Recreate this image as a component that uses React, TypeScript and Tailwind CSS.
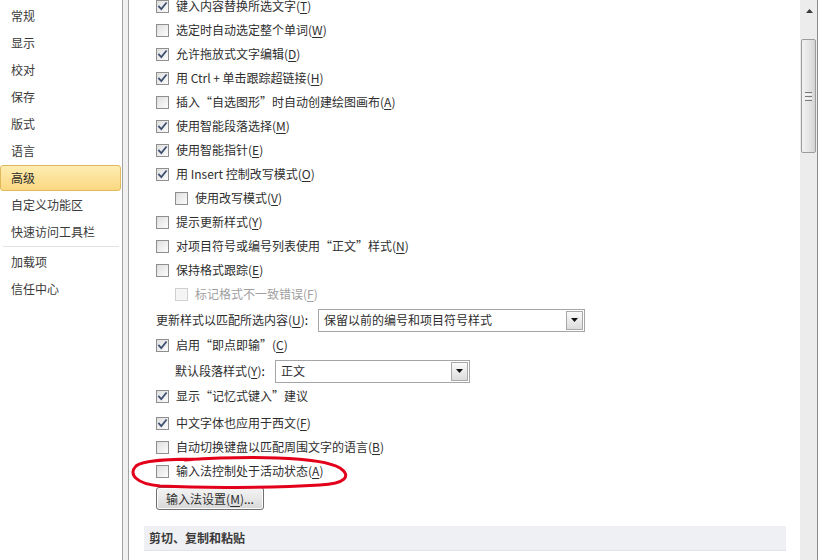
import React from "react";

const font = { fontFamily: '"Noto Sans CJK SC", "Microsoft YaHei", sans-serif' };

function Box({ checked, disabled }: { checked?: boolean; disabled?: boolean }) {
  return (
    <span
      className={
        "relative inline-flex h-[13px] w-[13px] shrink-0 items-center justify-center border " +
        (disabled ? "border-[#cfcfcf] bg-[#f7f7f7]" : "border-[#8f8f8f] bg-gradient-to-br from-[#dcdcdc] to-[#fbfbfb]")
      }
    >
      <span className={"absolute inset-[1px] " + (disabled ? "bg-[#f4f4f4]" : "bg-gradient-to-br from-[#e2e2e2] to-[#f9f9f9]")} />
      {checked && (
        <svg width="11" height="11" viewBox="0 0 11 11" className="relative">
          <path d="M2 5.5 L4.3 8 L9 2.2" fill="none" stroke="#3e4f72" strokeWidth="1.8" strokeLinecap="square" />
        </svg>
      )}
    </span>
  );
}

function Label({ text, acc, disabled }: { text: string; acc?: string; disabled?: boolean }) {
  return (
    <span className={"whitespace-nowrap " + (disabled ? "text-[#a0a0a0]" : "text-[#2e2e2e]")}>
      {text}
      {acc && (
        <>
          (<span className="underline underline-offset-2">{acc}</span>)
        </>
      )}
    </span>
  );
}

function Row({
  text,
  acc,
  checked,
  disabled,
  indent,
  mt,
  tail,
}: {
  text: string;
  acc?: string;
  checked?: boolean;
  disabled?: boolean;
  indent?: boolean;
  mt?: string;
  tail?: string;
}) {
  return (
    <div className={"flex h-[24px] items-center gap-[7px] " + (indent ? "pl-[19px] " : "") + (mt || "")}>
      <Box checked={checked} disabled={disabled} />
      <span>
        <Label text={text} acc={acc} disabled={disabled} />
        {tail && <span className="text-[#2e2e2e]">{tail}</span>}
      </span>
    </div>
  );
}

function Combo({ value, width }: { value: string; width: string }) {
  return (
    <div className={"flex h-[23px] items-center border border-[#a5a5a5] bg-white " + width}>
      <span className="flex-1 pl-[5px] text-[#2e2e2e] whitespace-nowrap">{value}</span>
      <span className="mr-[1px] flex h-[19px] w-[17px] items-center justify-center border border-[#a8a8a8] bg-gradient-to-b from-[#fafafa] to-[#dcdcdc]">
        <svg width="7" height="4" viewBox="0 0 7 4">
          <path d="M0 0 H7 L3.5 4 Z" fill="#111" />
        </svg>
      </span>
    </div>
  );
}

const side = ["常规", "显示", "校对", "保存", "版式", "语言", "高级", "自定义功能区", "快速访问工具栏"];

export default function App() {
  return (
    <div className="relative flex h-[560px] w-[825px] overflow-hidden bg-white text-[12px] leading-none" style={font}>
      {/* sidebar */}
      <div className="flex w-[123px] shrink-0 flex-col border-r border-[#a3a3a3] pt-[2px]">
        {side.map((s) =>
          s === "高级" ? (
            <div key={s} className="flex h-[27px] items-center">
              <div className="flex h-[26px] w-[121px] items-center rounded-[3px] border border-[#dfb95a] bg-gradient-to-b from-[#fdedb1] to-[#fbd881] pl-[10px] text-[#2a2a2a]">
                {s}
              </div>
            </div>
          ) : (
            <div key={s} className="flex h-[27px] items-center pl-[11px] text-[#3a3a3a]">
              {s}
            </div>
          )
        )}
        <div className="mx-[3px] my-[1px] h-[1px] bg-[#e3e3e3]" />
        {["加载项", "信任中心"].map((s) => (
          <div key={s} className="flex h-[27px] items-center pl-[11px] text-[#3a3a3a]">
            {s}
          </div>
        ))}
      </div>
      <div className="w-[5px] shrink-0 bg-[#f0f0f0]" />
      {/* content */}
      <div className="flex w-[672px] shrink-0 flex-col border-l border-[#a3a3a3] pl-[15px]">
        <div className="-mt-[6px] flex flex-col pl-[12px]">
          <Row checked text="键入内容替换所选文字" acc="T" />
          <Row text="选定时自动选定整个单词" acc="W" />
          <Row checked text="允许拖放式文字编辑" acc="D" />
          <Row checked text="用 Ctrl + 单击跟踪超链接" acc="H" />
          <Row text="插入“自选图形”时自动创建绘图画布" acc="A" />
          <Row checked text="使用智能段落选择" acc="M" />
          <Row checked text="使用智能指针" acc="E" />
          <Row checked text="用 Insert 控制改写模式" acc="O" />
          <Row indent text="使用改写模式" acc="V" />
          <Row text="提示更新样式" acc="Y" />
          <Row text="对项目符号或编号列表使用“正文”样式" acc="N" />
          <Row text="保持格式跟踪" acc="E" />
          <Row indent disabled text="标记格式不一致错误" acc="F" />
          <div className="mt-[2px] flex h-[24px] items-center">
            <span className="w-[162px] shrink-0">
              <Label text="更新样式以匹配所选内容" acc="U" />:
            </span>
            <Combo value="保留以前的编号和项目符号样式" width="w-[267px]" />
          </div>
          <Row checked mt="mt-[1px]" text="启用“即点即输”" acc="C" />
          <div className="mt-[2px] flex h-[24px] items-center pl-[19px]">
            <span className="w-[100px] shrink-0">
              <Label text="默认段落样式" acc="Y" />:
            </span>
            <Combo value="正文" width="w-[195px]" />
          </div>
          <Row checked mt="mt-[1px]" text="显示“记忆式键入”建议" />
          <Row checked mt="mt-[3px]" text="中文字体也应用于西文" acc="F" />
          <Row text="自动切换键盘以匹配周围文字的语言" acc="B" />
          <Row text="输入法控制处于活动状态" acc="A" />
          <div className="mt-[4px] flex">
            <button className="flex h-[23px] w-[108px] items-center justify-center rounded-[3px] border border-[#707070] bg-gradient-to-b from-[#f3f3f3] via-[#e8e8e8] to-[#d6d6d6] text-[12px] text-[#1e1e1e] shadow-[inset_0_0_0_1px_#fcfcfc]">
              <Label text="输入法设置" acc="M" />
              ...
            </button>
          </div>
        </div>
        <div className="mt-[16px] flex h-[25px] w-[642px] items-center border-b border-[#e2e3e6] bg-[#eff0f4] pl-[5px] font-bold text-[#3a3a3a]">
          剪切、复制和粘贴
        </div>
      </div>
      {/* scrollbar */}
      <div className="relative w-[18px] shrink-0 border-r border-[#8a8a8a] bg-[#ececec]">
        <svg className="absolute left-[6px] top-[9px]" width="7" height="4" viewBox="0 0 7 4">
          <path d="M3.5 0 L7 4 H0 Z" fill="#3a3a3a" />
        </svg>
        <div className="absolute left-[1px] top-[39px] flex h-[114px] w-[15px] flex-col items-center justify-center gap-[1px] rounded-[2px] border border-[#9c9c9c] bg-gradient-to-r from-[#f2f2f2] via-[#e6e6e6] to-[#d4d4d4]">
          <div className="h-[1px] w-[7px] bg-[#7a7a7a]" />
          <div className="h-[1px] w-[7px] bg-[#fafafa]" />
          <div className="h-[1px] w-[7px] bg-[#7a7a7a]" />
          <div className="h-[1px] w-[7px] bg-[#fafafa]" />
          <div className="h-[1px] w-[7px] bg-[#7a7a7a]" />
        </div>
      </div>
      <div className="flex-1 bg-white" />
      {/* red annotation */}
      <svg className="pointer-events-none absolute left-0 top-0" width="825" height="560">
        <path
          d="M185 460 C245 456 320 456 340 468 C352 476 345 484 320 485 C270 488 200 488 160 486 C136 484 128 474 136 466 C142 461 160 459 200 459"
          fill="none"
          stroke="#e2001a"
          strokeWidth="3"
          strokeLinecap="round"
        />
      </svg>
    </div>
  );
}
